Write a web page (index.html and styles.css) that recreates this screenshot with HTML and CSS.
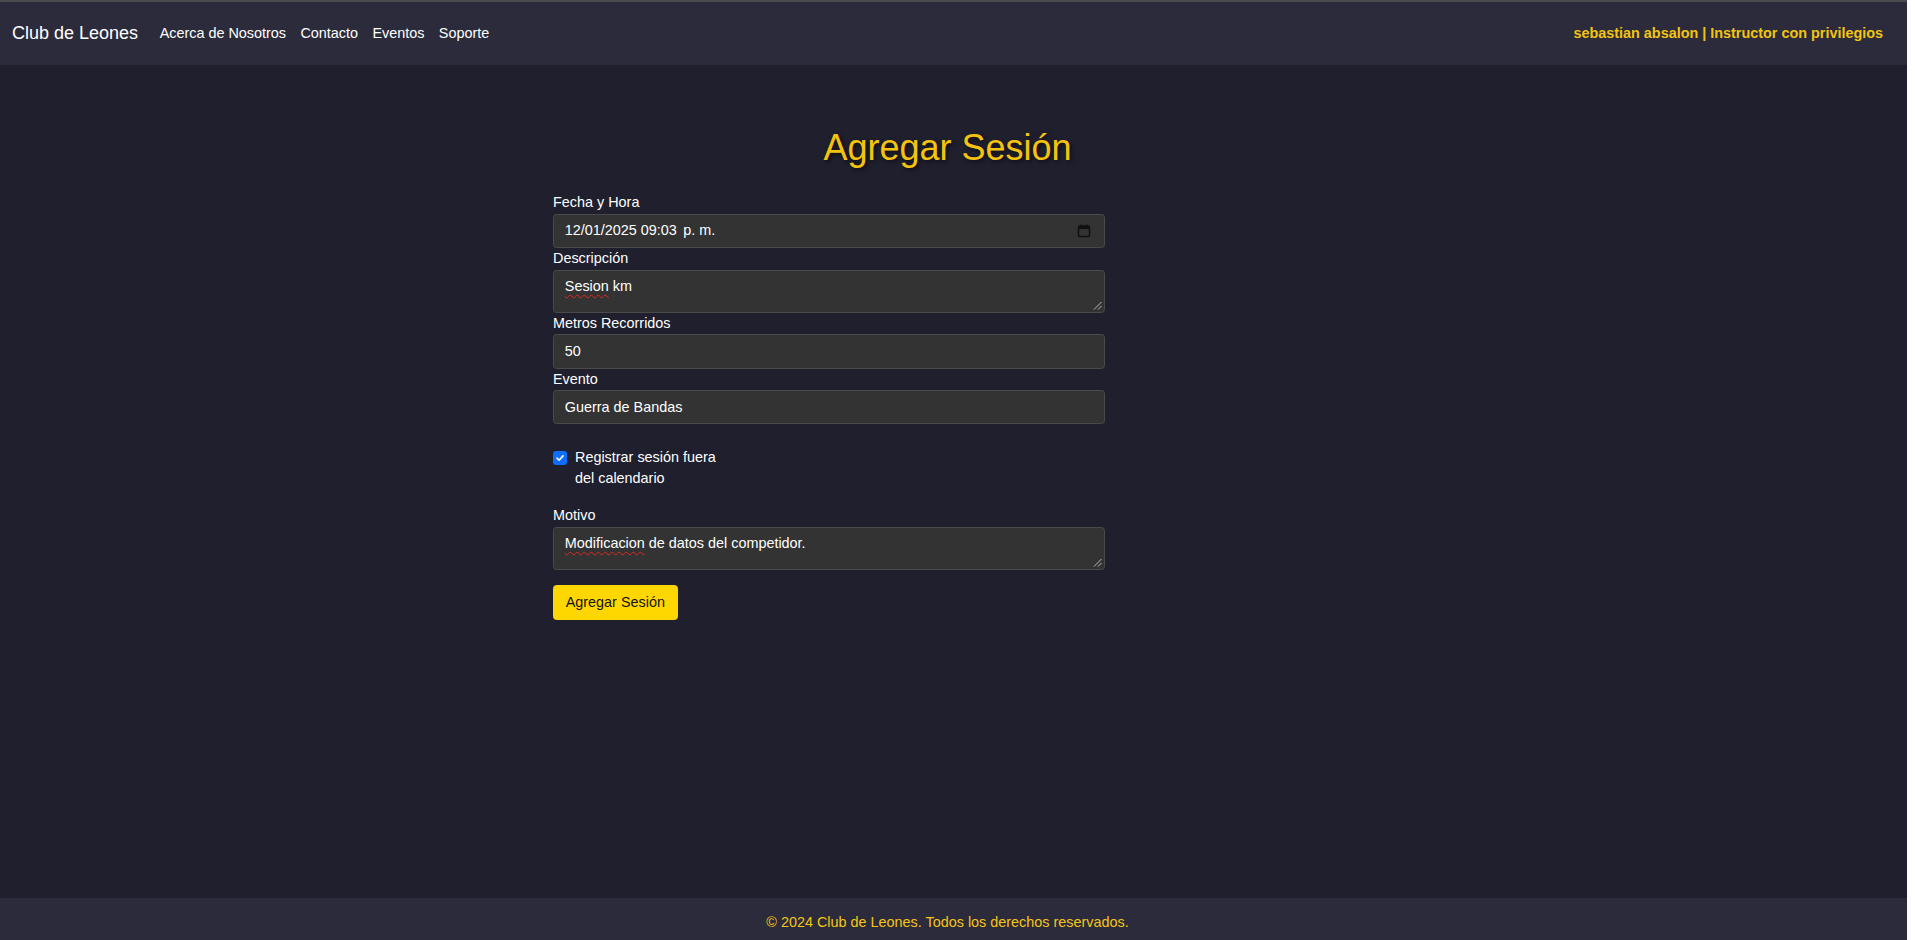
FILE: index.html
```html
<!DOCTYPE html>
<html lang="es">
<head>
<meta charset="utf-8">
<title>Agregar Sesión - Club de Leones</title>
<link rel="stylesheet" href="styles.css">
</head>
<body>
<div class="page">
  <header class="navbar">
    <div class="nav-left">
      <a class="brand" href="#">Club de Leones</a>
      <nav class="nav-links">
        <a href="#">Acerca de Nosotros</a>
        <a href="#">Contacto</a>
        <a href="#">Eventos</a>
        <a href="#">Soporte</a>
      </nav>
    </div>
    <div class="user">sebastian absalon | Instructor con privilegios</div>
  </header>

  <main class="main">
    <h1 class="title">Agregar Sesión</h1>
    <form class="form">
      <label class="label">Fecha y Hora</label>
      <div class="field field-date">
        <span>12/01/2025 09:03<span class="gap"></span>p. m.</span>
        <svg class="cal" width="14" height="14" viewBox="0 0 14 14" aria-hidden="true">
          <rect x="1.5" y="2" width="11" height="10.5" rx="1.5" fill="none" stroke="#111" stroke-width="1.6"/>
          <rect x="1.5" y="2" width="11" height="3" fill="#111"/>
          <rect x="3.5" y="0.5" width="1.6" height="2.5" fill="#111"/>
          <rect x="8.9" y="0.5" width="1.6" height="2.5" fill="#111"/>
        </svg>
      </div>

      <label class="label">Descripción</label>
      <div class="field field-area">
        <span class="misspelled">Sesion</span> km
        <svg class="grip" width="9" height="9" viewBox="0 0 9 9" aria-hidden="true">
          <line x1="1" y1="8.5" x2="8.5" y2="1" stroke="#bbb" stroke-width="1"/>
          <line x1="5" y1="8.5" x2="8.5" y2="5" stroke="#bbb" stroke-width="1"/>
        </svg>
      </div>

      <label class="label">Metros Recorridos</label>
      <div class="field">50</div>

      <label class="label">Evento</label>
      <div class="field">Guerra de Bandas</div>

      <div class="check">
        <span class="box">
          <svg width="10" height="10" viewBox="0 0 10 10" aria-hidden="true">
            <path d="M2 5.2 L4.1 7.2 L8 2.9" fill="none" stroke="#fff" stroke-width="1.6" stroke-linecap="round" stroke-linejoin="round"/>
          </svg>
        </span>
        <span class="check-label">Registrar sesión fuera del calendario</span>
      </div>

      <label class="label">Motivo</label>
      <div class="field field-area">
        <span class="misspelled">Modificacion</span> de datos del competidor.
        <svg class="grip" width="9" height="9" viewBox="0 0 9 9" aria-hidden="true">
          <line x1="1" y1="8.5" x2="8.5" y2="1" stroke="#bbb" stroke-width="1"/>
          <line x1="5" y1="8.5" x2="8.5" y2="5" stroke="#bbb" stroke-width="1"/>
        </svg>
      </div>

      <div class="actions">
        <button type="button" class="btn">Agregar Sesión</button>
      </div>
    </form>
  </main>

  <footer class="footer">© 2024 Club de Leones. Todos los derechos reservados.</footer>
</div>
</body>
</html>
```

FILE: styles.css
```css
html, body {
  margin: 0;
  padding: 0;
  background: #ffffff;
  height: 100%;
}

body {
  font-family: "Liberation Sans", Arial, sans-serif;
  font-size: 14.4px;
  line-height: 21.6px;
  color: #ffffff;
  overflow: hidden;
}

.page {
  width: calc(100% - 8px);
  height: 100vh;
  background: #1f1f2e;
  display: flex;
  flex-direction: column;
}

.navbar {
  flex: 0 0 auto;
  height: 63px;
  border-top: 2px solid #4b4b4f;
  background: #2b2b3b;
  display: flex;
  align-items: center;
  justify-content: space-between;
  padding: 0 24px 0 12px;
}

.nav-left {
  display: flex;
  align-items: center;
}

.brand {
  font-size: 18px;
  line-height: 27px;
  color: #ffffff;
  text-decoration: none;
  margin-right: 14.4px;
}

.nav-links {
  display: flex;
}

.nav-links a {
  color: #ffffff;
  text-decoration: none;
  padding: 0 7.2px;
  font-size: 14.4px;
}

.user {
  color: #f2c311;
  font-weight: bold;
  font-size: 14.4px;
}

.main {
  flex: 1 1 auto;
  padding-top: 60.5px;
}

.title {
  margin: 0 0 23.5px 0;
  text-align: center;
  font-size: 36px;
  line-height: 43.2px;
  font-weight: normal;
  color: #f4c20f;
  text-shadow: 2px 2px 4px rgba(0, 0, 0, 0.55);
  padding-right: 12px;
}

.form {
  width: 552px;
  margin-left: 553px;
  display: flex;
  flex-direction: column;
}

.label {
  display: block;
  line-height: 21.6px;
  color: #ffffff;
}

.field {
  box-sizing: border-box;
  height: 34.2px;
  background: #333333;
  border: 1px solid #4a4a4a;
  border-radius: 3.4px;
  padding: 5.4px 10.8px;
  color: #ffffff;
  line-height: 21.6px;
  position: relative;
}

.field-date {
  display: flex;
  align-items: center;
  justify-content: space-between;
  padding-right: 13px;
}

.gap {
  display: inline-block;
  width: 6.5px;
}

.cal {
  display: block;
}

.field-area {
  height: 43.3px;
}

.grip {
  position: absolute;
  right: 2px;
  bottom: 2px;
}

.misspelled {
  text-decoration: underline wavy #e0281e;
  text-decoration-thickness: 1px;
  text-underline-offset: 3px;
}

.check {
  display: flex;
  align-items: flex-start;
  margin: 23px 0 16px 0;
}

.box {
  box-sizing: border-box;
  width: 14px;
  height: 14px;
  margin-top: 4px;
  margin-right: 8px;
  border-radius: 3px;
  background: #0d6efd;
  display: flex;
  align-items: center;
  justify-content: center;
}

.check-label {
  width: 150px;
  line-height: 21px;
}

.actions {
  margin-top: 15px;
}

.btn {
  font-family: "Liberation Sans", Arial, sans-serif;
  font-size: 14.4px;
  line-height: 21.6px;
  height: 34.2px;
  padding: 5.4px 11.7px;
  background: #ffd700;
  color: #111111;
  border: 1px solid #ffd700;
  border-radius: 3.4px;
  cursor: pointer;
}

.footer {
  flex: 0 0 auto;
  box-sizing: border-box;
  height: 42.4px;
  padding-top: 14.4px;
  padding-right: 12px;
  background: #2b2b3b;
  color: #f5c518;
  text-align: center;
  line-height: 21.6px;
}
```
